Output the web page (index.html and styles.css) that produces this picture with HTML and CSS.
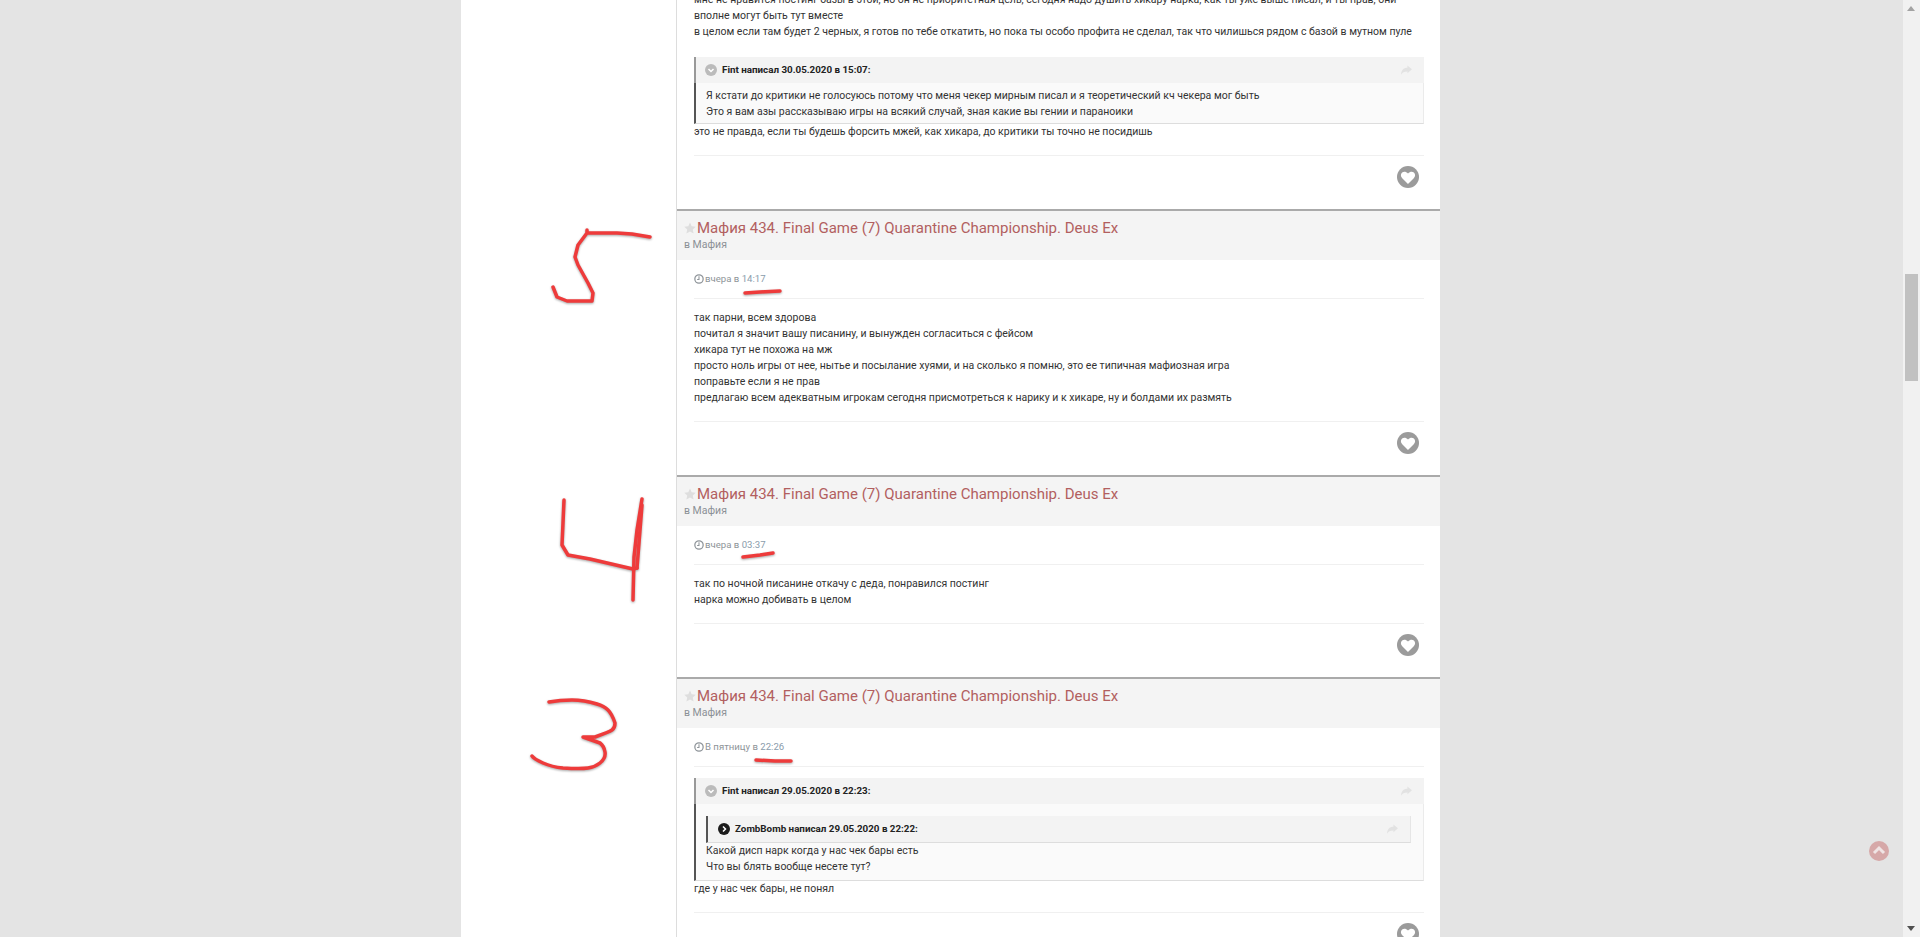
FILE: index.html
```html
<!DOCTYPE html>
<html lang="ru">
<head>
    <meta charset="UTF-8">
    <title>Мафия 434. Final Game (7) Quarantine Championship. Deus Ex</title>
    <link rel="stylesheet" href="styles.css">
</head>
<body>
    <svg class="sprite" width="0" height="0">
        <symbol id="i-star" viewBox="0 0 24 24"><path d="M12 1l3.400 7.400 8.100.9-6 5.500 1.700 8L12 18.800l-7.200 4 1.700-8-6-5.500 8.100-.9z"/></symbol>
        <symbol id="i-heart" viewBox="0 0 24 24"><circle cx="12" cy="12" r="12" fill="#9b9b9b"/><path fill="#fff" d="M12 19.500l-6.300-6.200c-1.900-1.900-1.900-4.700-.1-6.200 1.700-1.400 4.300-1.200 6.400 1 2.100-2.200 4.700-2.400 6.400-1 1.800 1.500 1.800 4.300-.1 6.200z"/></symbol>
        <symbol id="i-reply" viewBox="0 0 24 24"><path d="M24 9l-10-8v5C5 6 1 11 0 21c3-5 7-7 14-7v4z"/></symbol>
        <symbol id="i-clock" viewBox="0 0 24 24"><circle cx="12" cy="12" r="10" fill="none" stroke="currentColor" stroke-width="3"/><path fill="none" stroke="currentColor" stroke-width="2.500" d="M12 5.500V13H7.500"/></symbol>
    </svg>

    <div class="viewport">
        <div class="page">
            <div class="wrap">
                <aside class="sidebar"></aside>
                <main class="feed">
                    <article class="post post-first">
                        <div class="post-body">
                            <div class="post-text">
                                мне не нравится постинг базы в этой, но он не приоритетная цель, сегодня надо душить хикару-нарка, как ты уже выше писал, и ты прав, они вполне могут быть тут вместе<br>
                                в целом если там будет 2 черных, я готов по тебе откатить, но пока ты особо профита не сделал, так что чилишься рядом с базой в мутном пуле<br><br>
                                <blockquote class="quote">
                                    <div class="quote-head">
                                        <span class="quote-avatar"><svg viewBox="0 0 12 12"><path d="M3.500 5l2.500 2.500L8.500 5"/></svg></span>
                                        <span class="quote-author">Fint написал 30.05.2020 в 15:07:</span>
                                        <svg class="quote-share"><use href="#i-reply"/></svg>
                                    </div>
                                    <div class="quote-body">
                                        Я кстати до критики не голосуюсь потому что меня чекер мирным писал и я теоретический кч чекера мог быть<br>
                                        Это я вам азы рассказываю игры на всякий случай, зная какие вы гении и параноики
                                    </div>
                                </blockquote>
                                это не правда, если ты будешь форсить мжей, как хикара, до критики ты точно не посидишь
                            </div>
                        </div>
                        <div class="post-foot"><svg class="like"><use href="#i-heart"/></svg></div>
                    </article>

                    <article class="post">
                        <header class="post-head">
                            <div class="post-title"><svg class="star"><use href="#i-star"/></svg><a>Мафия 434. Final Game (7) Quarantine Championship. Deus Ex</a></div>
                            <div class="post-forum">в Мафия</div>
                        </header>
                        <div class="post-body">
                            <div class="post-date"><svg class="clock"><use href="#i-clock"/></svg>вчера в <span class="post-time">14:17</span></div>
                            <div class="post-text">
                                так парни, всем здорова<br>
                                почитал я значит вашу писанину, и вынужден согласиться с фейсом<br>
                                хикара тут не похожа на мж<br>
                                просто ноль игры от нее, нытье и посылание хуями, и на сколько я помню, это ее типичная мафиозная игра<br>
                                поправьте если я не прав<br>
                                предлагаю всем адекватным игрокам сегодня присмотреться к нарику и к хикаре, ну и болдами их размять
                            </div>
                        </div>
                        <div class="post-foot"><svg class="like"><use href="#i-heart"/></svg></div>
                    </article>

                    <article class="post">
                        <header class="post-head">
                            <div class="post-title"><svg class="star"><use href="#i-star"/></svg><a>Мафия 434. Final Game (7) Quarantine Championship. Deus Ex</a></div>
                            <div class="post-forum">в Мафия</div>
                        </header>
                        <div class="post-body">
                            <div class="post-date"><svg class="clock"><use href="#i-clock"/></svg>вчера в <span class="post-time">03:37</span></div>
                            <div class="post-text">
                                так по ночной писанине откачу с деда, понравился постинг<br>
                                нарка можно добивать в целом
                            </div>
                        </div>
                        <div class="post-foot"><svg class="like"><use href="#i-heart"/></svg></div>
                    </article>

                    <article class="post">
                        <header class="post-head">
                            <div class="post-title"><svg class="star"><use href="#i-star"/></svg><a>Мафия 434. Final Game (7) Quarantine Championship. Deus Ex</a></div>
                            <div class="post-forum">в Мафия</div>
                        </header>
                        <div class="post-body">
                            <div class="post-date"><svg class="clock"><use href="#i-clock"/></svg>В пятницу в <span class="post-time">22:26</span></div>
                            <div class="post-text">
                                <blockquote class="quote">
                                    <div class="quote-head">
                                        <span class="quote-avatar"><svg viewBox="0 0 12 12"><path d="M3.500 5l2.500 2.500L8.500 5"/></svg></span>
                                        <span class="quote-author">Fint написал 29.05.2020 в 22:23:</span>
                                        <svg class="quote-share"><use href="#i-reply"/></svg>
                                    </div>
                                    <div class="quote-body quote-body-nested">
                                        <blockquote class="quote-nested">
                                            <span class="quote-avatar quote-avatar-dark"><svg viewBox="0 0 12 12"><path d="M5 3.500L7.500 6 5 8.500"/></svg></span>
                                            <span class="quote-author">ZombBomb написал 29.05.2020 в 22:22:</span>
                                            <svg class="quote-share"><use href="#i-reply"/></svg>
                                        </blockquote>
                                        Какой дисп нарк когда у нас чек бары есть<br>
                                        Что вы блять вообще несете тут?
                                    </div>
                                </blockquote>
                                где у нас чек бары, не понял
                            </div>
                        </div>
                        <div class="post-foot"><svg class="like"><use href="#i-heart"/></svg></div>
                    </article>
                </main>
            </div>
        </div>

        <div class="scrollbar">
            <span class="scroll-arrow scroll-arrow-up"></span>
            <div class="scroll-track"><div class="scroll-thumb"></div></div>
            <span class="scroll-arrow scroll-arrow-down"></span>
        </div>
    </div>

    <div class="to-top"><svg viewBox="0 0 20 20"><path d="M5 12l5-5 5 5"/></svg></div>

    <!-- red marker scribbles on top of the screenshot -->
    <svg class="marks" viewBox="0 0 1920 937">
        <path d="M650 237L632 234 617 233 587 233 587 230M587 233L578 245 575 257 578 265 588 283 593 293 592 301 567 301 557 297 553 287"/>
        <path d="M745 293L760 292 780 291"/>
        <path d="M564 500L563 523 562 545 568 555 590 559 633 569 637 568"/>
        <path d="M642 499L637 530 634 557 633 600"/>
        <path d="M642 505L640 530 637 568"/>
        <path d="M743 557L760 555 773 553"/>
        <path d="M549 702Q560 700 572 700T597 704Q604 706 608 710T615 723Q615 728 612 730T595 737L583 737 600 743Q604 746 605 752T600 763Q595 767 588 768T563 768Q552 767 543 763T532 756"/>
        <path d="M756 760L775 761 791 761"/>
    </svg>
</body>
</html>
```

FILE: styles.css
```css
* {
    box-sizing: border-box;
}

body {
    margin: 0;
    height: 937px;
    overflow: hidden;
    position: relative;
    font-family: Roboto, "Liberation Sans", sans-serif;
    font-size: 10.5px;
    line-height: 16px;
    color: #333;
}

.sprite {
    display: block;
}

.viewport {
    display: flex;
    height: 937px;
}

.page {
    flex: 1;
    overflow: hidden;
    background: #e4e4e4;
    padding-left: 461px;
}

.wrap {
    display: flex;
    width: 979px;
    min-height: 100%;
    background: #fff;
}

.sidebar {
    width: 216px;
    border-right: 1px solid #ddd;
}

.feed {
    flex: 1;
    margin-top: -8px;
}

.post {
    border-top: 2px solid #aaa;
}

.post-first {
    border-top: none;
}

.post-head {
    height: 49px;
    padding: 8px 8px 0 7px;
    background: #f4f4f4;
}

.post-title {
    display: flex;
    align-items: center;
    font-size: 15px;
    line-height: 18px;
    color: #b25f60;
}

.star {
    width: 12px;
    height: 12px;
    margin-right: 1px;
    fill: #dedede;
}

.post-forum {
    color: #8b9096;
}

.post-body {
    padding: 0 16px 15px 17px;
}

.post-date {
    display: flex;
    align-items: center;
    height: 39px;
    padding-bottom: 1px;
    border-bottom: 1px solid #f0f0f0;
    margin-bottom: 11px;
    font-size: 9.6px;
    color: #8e9499;
    white-space: pre;
}

.post-time {
    color: #8a9cab;
}

.clock {
    width: 10px;
    height: 10px;
    margin-right: 1px;
}

.quote {
    margin: 1px 0 0;
    background: #fafafa;
}

.quote-head {
    display: flex;
    align-items: center;
    height: 26px;
    padding: 0 12px 0 9px;
    background: #f3f3f3;
    border-left: 2px solid #999;
}

.quote-avatar {
    flex: none;
    width: 12px;
    height: 12px;
    margin-right: 5px;
    border-radius: 50%;
    background: #bbb;
}

.quote-avatar svg {
    display: block;
    width: 12px;
    height: 12px;
    fill: none;
    stroke: #fff;
    stroke-width: 1.5;
}

.quote-avatar-dark {
    background: #1c1c1c;
}

.quote-author {
    flex: 1;
    font-size: 9.8px;
    font-weight: 700;
    color: #222;
}

.quote-share {
    width: 11px;
    height: 11px;
    fill: #e2e2e2;
}

.quote-body {
    padding: 5px 0 3px 10px;
    border-left: 2px solid #555;
    border-right: 1px solid #ebebeb;
    border-bottom: 1px solid #ddd;
}

.quote-body-nested {
    padding: 12px 12px 5px 10px;
}

.quote-nested {
    display: flex;
    align-items: center;
    height: 27px;
    margin: 0;
    padding: 0 12px 0 10px;
    background: #f3f3f3;
    border-left: 2px solid #555;
    border-right: 1px solid #e6e6e6;
    border-bottom: 1px solid #ddd;
}

.post-foot {
    display: flex;
    justify-content: flex-end;
    height: 54px;
    margin: 0 16px 0 17px;
    padding: 10px 5px 0 0;
    border-top: 1px solid #f0f0f0;
}

.like {
    width: 22px;
    height: 22px;
}

.scrollbar {
    display: flex;
    flex-direction: column;
    width: 17px;
    background: #f1f1f1;
}

.scroll-track {
    flex: 1;
    padding: 257px 2px 0;
}

.scroll-thumb {
    height: 107px;
    background: #c1c1c1;
}

.scroll-arrow {
    flex: none;
    width: 0;
    height: 0;
    margin: 6px 4px;
    border-left: 4.5px solid transparent;
    border-right: 4.5px solid transparent;
}

.scroll-arrow-up {
    border-bottom: 5px solid #a3a3a3;
}

.scroll-arrow-down {
    border-top: 5px solid #505050;
}

.to-top {
    position: absolute;
    left: 1869px;
    top: 841px;
    width: 20px;
    height: 20px;
    border-radius: 50%;
    background: #d6a8a8;
}

.to-top svg {
    display: block;
    fill: none;
    stroke: #f0e4e4;
    stroke-width: 3;
}

.marks {
    position: absolute;
    left: 0;
    top: 0;
    width: 1920px;
    height: 937px;
    fill: none;
    stroke: #ee3b3b;
    stroke-width: 3.5;
    stroke-linecap: round;
    stroke-linejoin: round;
    filter: drop-shadow(0 1px 1px rgba(0, 0, 0, 0.35));
    pointer-events: none;
}
```
